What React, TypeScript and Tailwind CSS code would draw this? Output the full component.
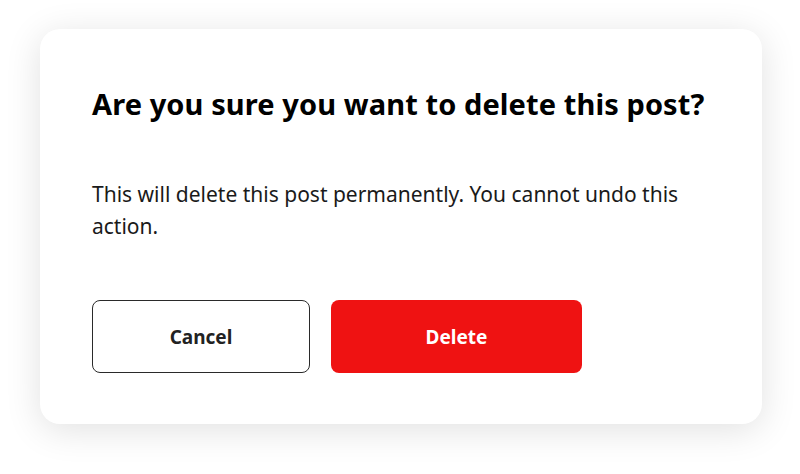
import React from 'react';

const App: React.FC = () => {
  return (
    <div
      className="w-[800px] h-[474px] bg-white pt-[29px] pl-[40px]"
      style={{ fontFamily: '"Noto Sans", sans-serif' }}
    >
      <div className="w-[722px] h-[395px] bg-white rounded-[20px] shadow-[0_6px_36px_rgba(0,0,0,0.12)] px-[52px] pt-[55px]">
        <h2 className="text-[29px] leading-[40px] font-bold text-black tracking-[0.1px]">
          Are you sure you want to delete this post?
        </h2>
        <p className="mt-[54px] text-[21px] leading-[32px] text-[#1a1a1a]">
          This will delete this post permanently. You cannot undo this action.
        </p>
        <div className="mt-[58px] flex gap-[21px]">
          <button className="w-[218px] h-[73px] rounded-[8px] border-[1.5px] border-[#2a2a2a] bg-white pt-[2px] text-[19px] font-bold text-[#222]">
            Cancel
          </button>
          <button className="w-[251px] h-[73px] rounded-[8px] bg-[#ef1212] pt-[2px] text-[19px] font-bold text-white">
            Delete
          </button>
        </div>
      </div>
    </div>
  );
};

export default App;
